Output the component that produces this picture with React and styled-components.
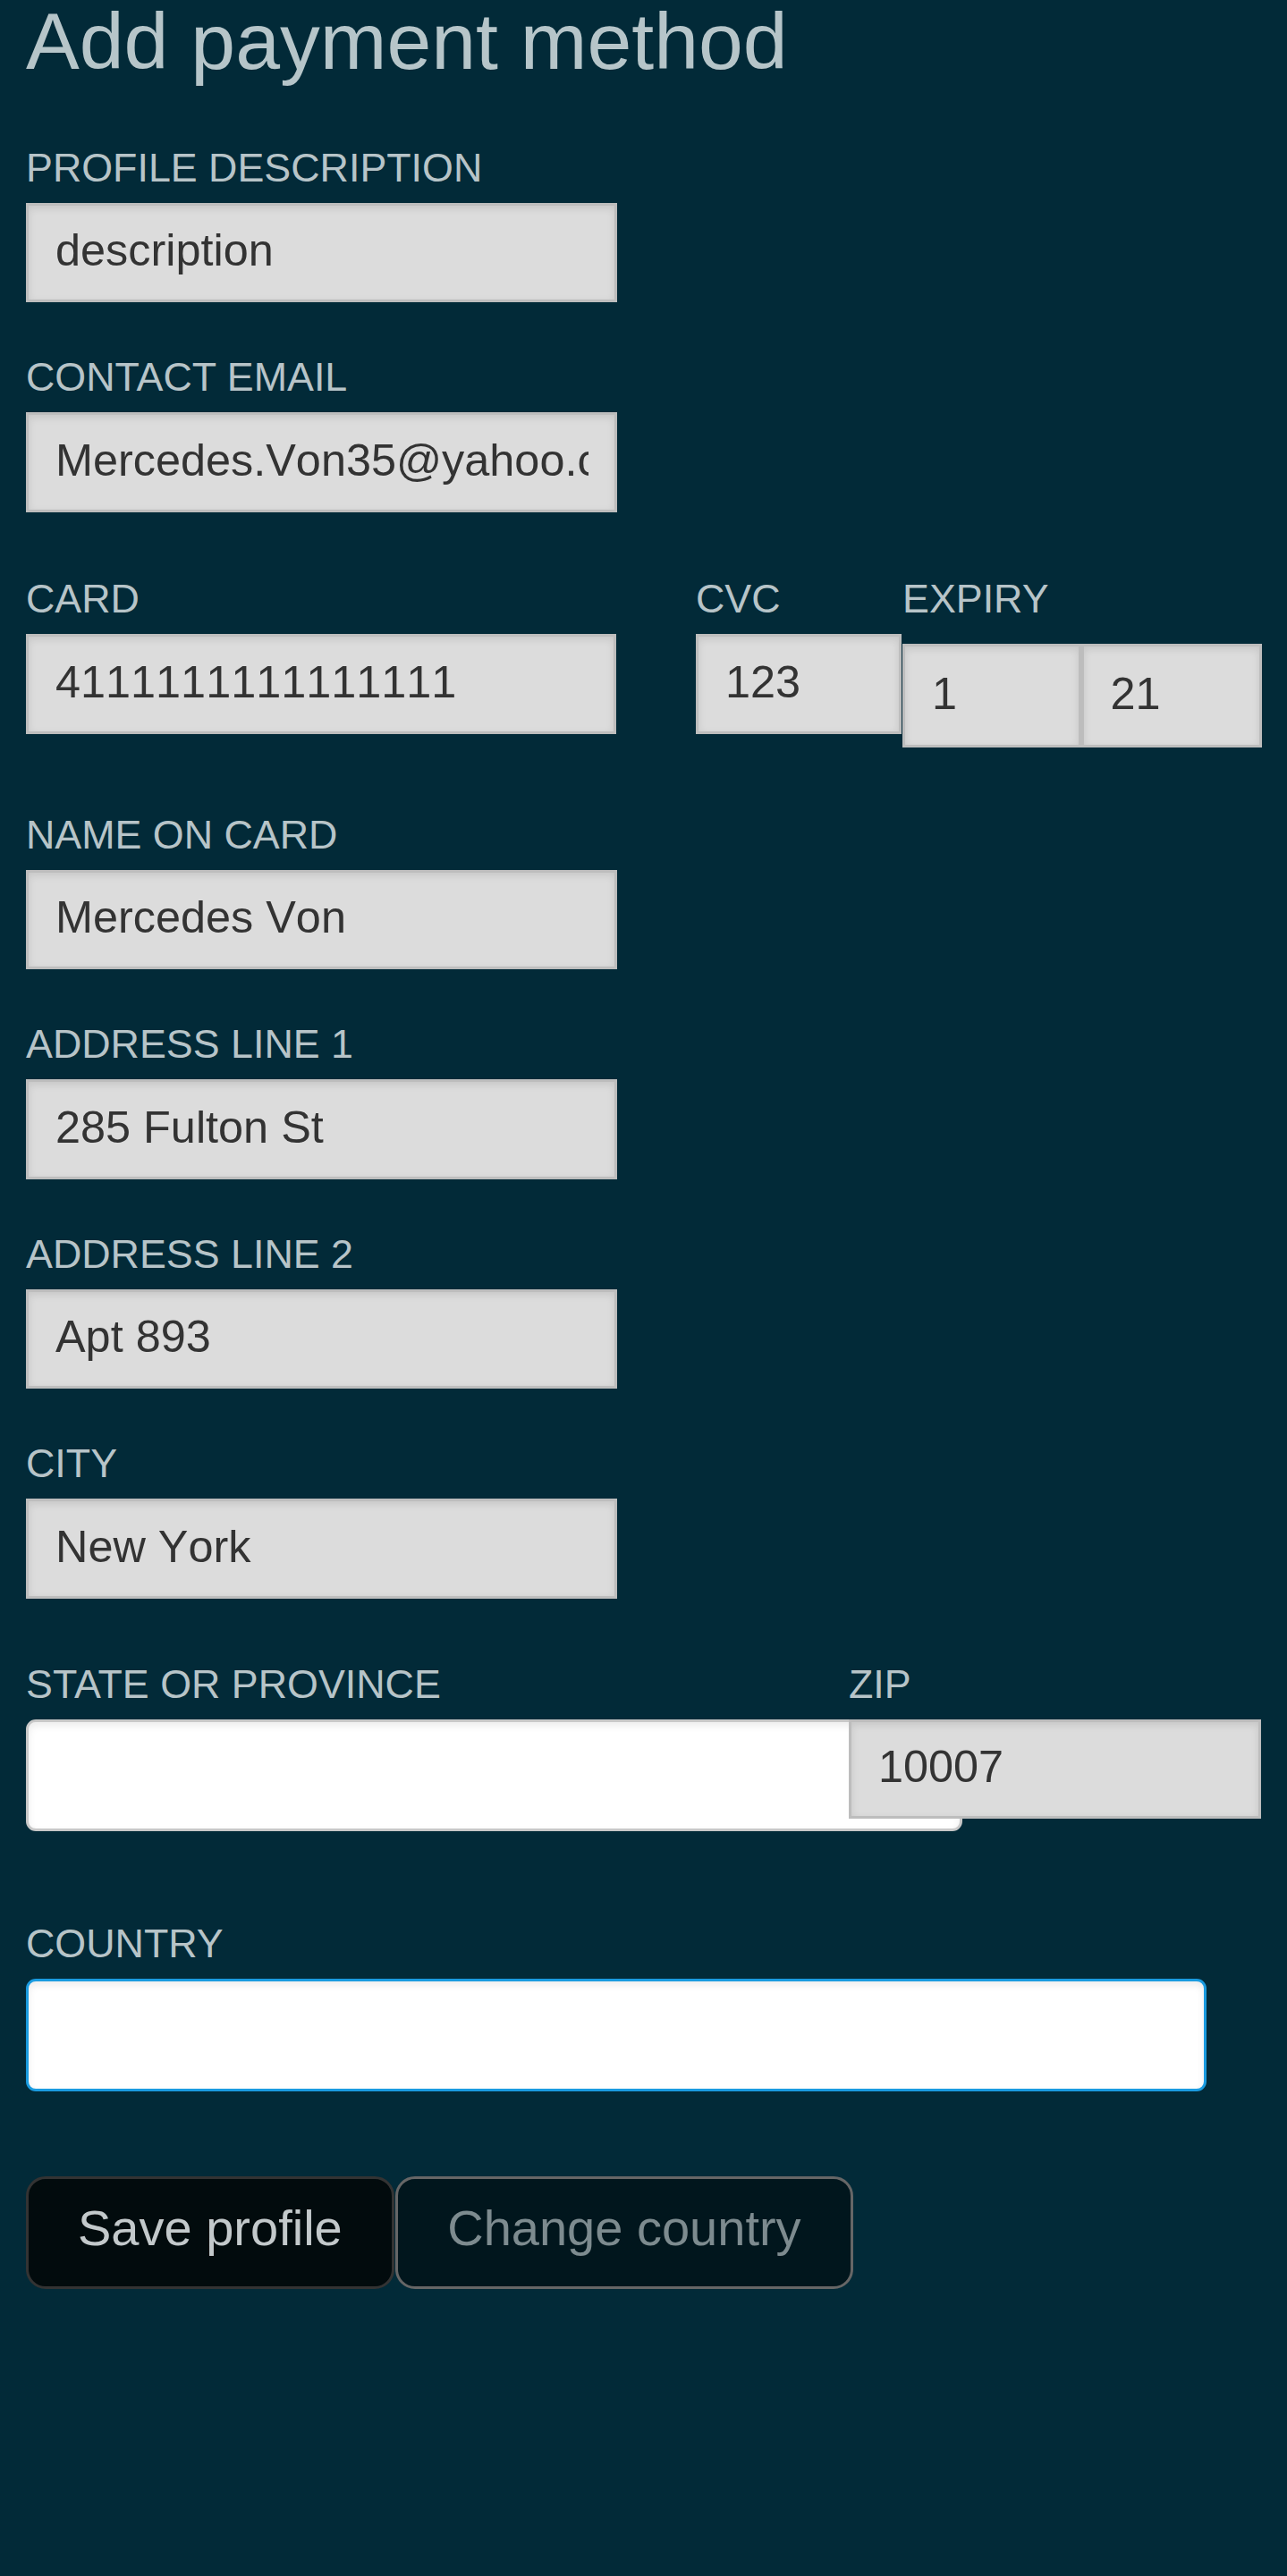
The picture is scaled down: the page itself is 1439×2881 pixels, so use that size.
import styled, { createGlobalStyle } from 'styled-components';

const GlobalStyle = createGlobalStyle`
  *, *::before, *::after {
    box-sizing: border-box;
  }
  html, body {
    margin: 0;
    padding: 0;
    background: #022a38;
  }
  body {
    font-family: 'Liberation Sans', Arial, sans-serif;
    min-height: 2881px;
  }
`;

const Page = styled.main`
  padding: 0 29px;
  min-height: 2881px;
  background: #022a38;
`;

const Title = styled.h1`
  margin: 0;
  font-size: 89.6px;
  font-weight: 400;
  line-height: 93px;
  color: #b6c5c9;
  white-space: nowrap;
`;

const Field = styled.div`
  margin-top: ${(p) => p.$mt || 0}px;
  width: ${(p) => (p.$w ? `${p.$w}px` : 'auto')};
  flex: none;
`;

const Label = styled.label`
  display: block;
  font-size: 44.8px;
  line-height: 50.6px;
  margin-bottom: 14.4px;
  color: #b7c4c8;
  white-space: nowrap;
`;

const Input = styled.input`
  display: block;
  width: ${(p) => p.$w || 661}px;
  height: ${(p) => p.$h || 111.5}px;
  margin: 0;
  padding: 0 29px 6px 30px;
  font-family: inherit;
  font-size: 50.4px;
  font-kerning: none;
  color: #333;
  background: #dcdcdc;
  border: 3px solid #bdbdbd;
  border-radius: 0;
  box-shadow: inset 0 3px 8px rgba(0, 0, 0, 0.1);
  outline: none;
`;

const RoundInput = styled.input`
  display: block;
  width: ${(p) => p.$w}px;
  height: 125.5px;
  margin: 0;
  padding: 0 28px;
  font-family: inherit;
  font-size: 50.4px;
  color: #333;
  background: #fff;
  border: 3px solid ${(p) => (p.$focused ? '#1a9be0' : '#c8c8c8')};
  border-radius: 11px;
  box-shadow: inset 0 4px 8px rgba(0, 0, 0, 0.08);
  outline: none;
`;

const Row = styled.div`
  display: flex;
  align-items: flex-start;
  margin-top: ${(p) => p.$mt || 0}px;
`;

const ExpiryInputs = styled.div`
  display: flex;
  padding-top: 11px;
`;

const Actions = styled.div`
  display: flex;
  gap: 1.5px;
  margin-top: 95px;
`;

const Button = styled.button`
  height: 126px;
  padding: 0 55px 11px;
  font-family: inherit;
  font-size: 56px;
  border-radius: 22px;
  border: 3px solid ${(p) => (p.$primary ? '#333' : '#666')};
  background: ${(p) => (p.$primary ? '#020b0d' : '#01161d')};
  color: ${(p) => (p.$primary ? '#c3c9cb' : '#7d8b8f')};
  cursor: pointer;
  white-space: nowrap;
`;

export default function App() {
  return (
    <>
      <GlobalStyle />
      <Page>
        <Title>Add payment method</Title>

        <Field $mt={69}>
          <Label>PROFILE DESCRIPTION</Label>
          <Input defaultValue='description' />
        </Field>

        <Field $mt={58}>
          <Label>CONTACT EMAIL</Label>
          <Input defaultValue='Mercedes.Von35@yahoo.com' />
        </Field>

        {/* card, cvc, expiry */}
        <Row $mt={71.5}>
          <Field $w={749}>
            <Label>CARD</Label>
            <Input $w={660} defaultValue='4111111111111111' />
          </Field>
          <Field $w={231}>
            <Label>CVC</Label>
            <Input $w={230} defaultValue='123' />
          </Field>
          <Field>
            <Label>EXPIRY</Label>
            <ExpiryInputs>
              <Input $w={199.5} $h={115.5} defaultValue='1' />
              <Input $w={202} $h={115.5} defaultValue='21' />
            </ExpiryInputs>
          </Field>
        </Row>

        <Field $mt={72}>
          <Label>NAME ON CARD</Label>
          <Input defaultValue='Mercedes Von' />
        </Field>

        <Field $mt={58}>
          <Label>ADDRESS LINE 1</Label>
          <Input defaultValue='285 Fulton St' />
        </Field>

        <Field $mt={58}>
          <Label>ADDRESS LINE 2</Label>
          <Input defaultValue='Apt 893' />
        </Field>

        <Field $mt={58}>
          <Label>CITY</Label>
          <Input defaultValue='New York' />
        </Field>

        {/* state overflows under the zip box */}
        <Row $mt={70}>
          <Field $w={920}>
            <Label>STATE OR PROVINCE</Label>
            <RoundInput $w={1047} defaultValue='' />
          </Field>
          <Field $w={461}>
            <Label>ZIP</Label>
            <Input $w={461} defaultValue='10007' />
          </Field>
        </Row>

        <Field $mt={100}>
          <Label>COUNTRY</Label>
          <RoundInput $w={1320} $focused defaultValue='' />
        </Field>

        <Actions>
          <Button $primary type='button'>
            Save profile
          </Button>
          <Button type='button'>Change country</Button>
        </Actions>
      </Page>
    </>
  );
}
